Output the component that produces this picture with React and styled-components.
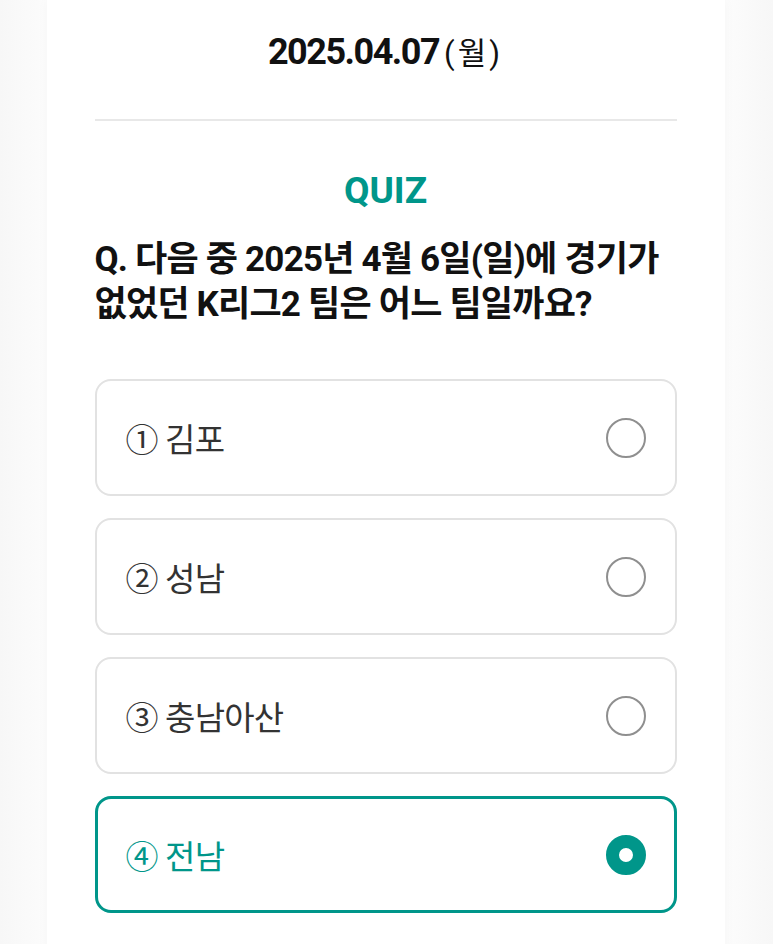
import React from "react";
import styled, { createGlobalStyle } from "styled-components";

const GlobalStyle = createGlobalStyle`
  html, body {
    margin: 0;
    padding: 0;
    background: #f7f7f7;
  }
  body {
    font-family: Roboto, "Noto Sans CJK KR", sans-serif;
  }
`;

const options = [
  { no: "①", label: "김포" },
  { no: "②", label: "성남" },
  { no: "③", label: "충남아산" },
  { no: "④", label: "전남", selected: true },
];

const App = () => {
  return (
    <>
      <GlobalStyle />
      <Page>
        <Card>
          <DateLine>
            2025.04.07<Weekday>(월)</Weekday>
          </DateLine>
          <Divider />
          <QuizTitle>QUIZ</QuizTitle>
          <Question>
            Q. 다음 중 2025년 4월 6일(일)에 경기가 없었던 K리그2 팀은 어느 팀일까요?
          </Question>
          <OptionList>
            {options.map((opt) => (
              <Option key={opt.no} $selected={opt.selected}>
                <OptionLabel $selected={opt.selected}>
                  {opt.no} {opt.label}
                </OptionLabel>
                <Radio $selected={opt.selected} />
              </Option>
            ))}
          </OptionList>
        </Card>
      </Page>
    </>
  );
};

const Page = styled.div`
  min-height: 944px;
  display: flex;
  justify-content: center;
  background: linear-gradient(
    90deg,
    #f7f7f7 0%,
    #fcfcfc 6%,
    #fcfcfc 94%,
    #f7f7f7 100%
  );
`;

const Card = styled.div`
  width: 582px;
  margin-left: -2px;
  background: #fff;
  padding: 26px 48px 40px;
  box-shadow: 0 0 12px rgba(0, 0, 0, 0.03);
`;

const DateLine = styled.div`
  text-align: center;
  font-size: 36px;
  font-weight: 700;
  color: #111;
  letter-spacing: -1.5px;
  line-height: 52px;
`;

const Weekday = styled.span`
  font-weight: 400;
  font-size: 31px;
  letter-spacing: 3px;
  margin-left: 5px;
`;

const Divider = styled.hr`
  border: none;
  height: 2px;
  background: #e8e8e8;
  margin: 39px 0 0;
`;

const QuizTitle = styled.h2`
  margin: 44px 0 0;
  text-align: center;
  color: #00968a;
  font-size: 37px;
  font-weight: 700;
  line-height: 52px;
`;

const Question = styled.p`
  margin: 20px 0 0;
  font-size: 35px;
  font-weight: 700;
  color: #111;
  line-height: 45px;
  letter-spacing: -0.8px;
`;

const OptionList = styled.div`
  margin-top: 52px;
  display: flex;
  flex-direction: column;
  gap: 22px;
`;

const Option = styled.div`
  height: 117px;
  box-sizing: border-box;
  display: flex;
  align-items: center;
  justify-content: space-between;
  padding: 0 ${(p) => (p.$selected ? "28px" : "29px")};
  border: ${(p) => (p.$selected ? "3px solid #00968a" : "2px solid #e2e2e2")};
  border-radius: 16px;
  background: #fff;
`;

const OptionLabel = styled.span`
  font-size: 33px;
  color: ${(p) => (p.$selected ? "#00968a" : "#333")};
  letter-spacing: -0.8px;
`;

const Radio = styled.span`
  width: 40px;
  height: 40px;
  box-sizing: border-box;
  border-radius: 50%;
  border: ${(p) => (p.$selected ? "13px solid #00968a" : "2px solid #8f8f8f")};
  background: #fff;
`;

export default App;
